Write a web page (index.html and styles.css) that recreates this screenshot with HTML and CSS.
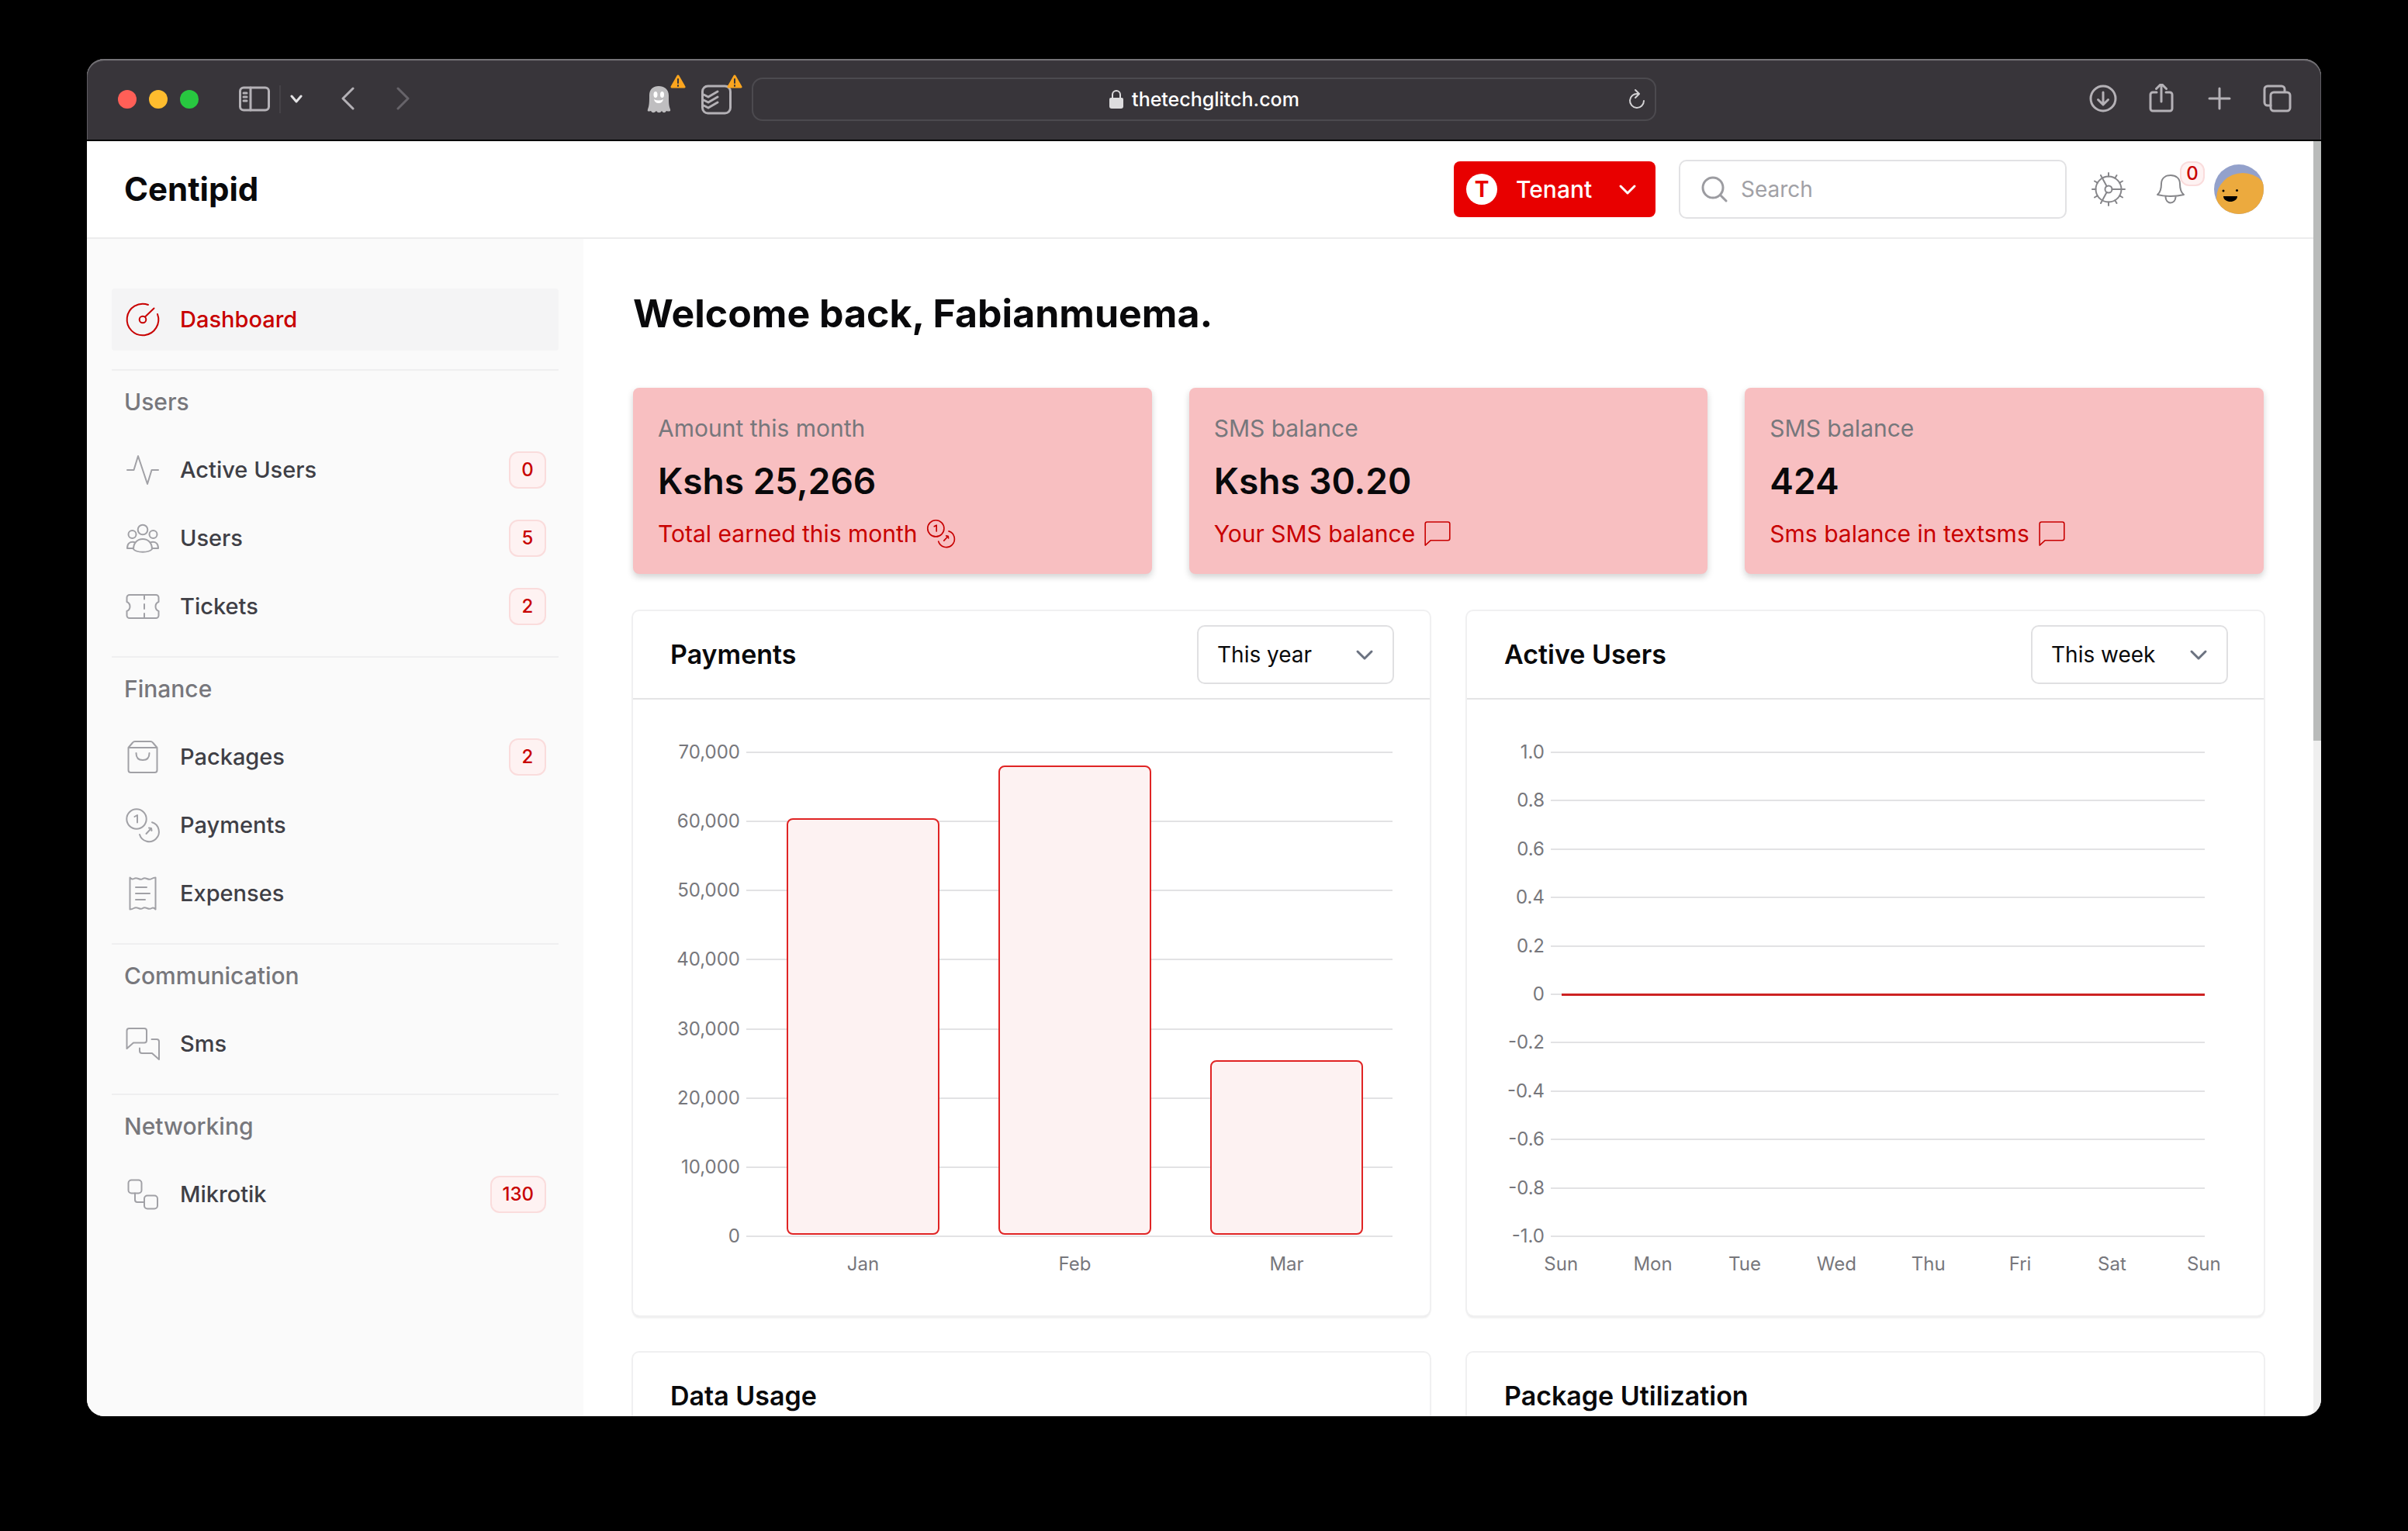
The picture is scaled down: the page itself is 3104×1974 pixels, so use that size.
FILE: index.html
```html
<!DOCTYPE html>
<html lang="en">
<head>
<meta charset="utf-8">
<title>Centipid</title>
<link rel="stylesheet" href="styles.css">
</head>
<body>
<svg class="sprite" aria-hidden="true">
  <symbol id="i-coins" viewBox="0 0 48 48"><circle cx="16" cy="16" r="12.700"/><path d="M13.500 13 17 11v9.500M36 20.300a12.700 12.700 0 1 1-16 15.700M28.500 35l6-6.500M32 27.500l3 .5.500 3"/></symbol>
  <symbol id="i-bubble" viewBox="0 0 48 48"><path d="M4 43V8a3 3 0 0 1 3-3h34a3 3 0 0 1 3 3v24a3 3 0 0 1-3 3H13z"/></symbol>
  <symbol id="i-chevron" viewBox="0 0 24 24"><path d="M3 8l9 9 9-9"/></symbol>
</svg>
<div class="window">
  <div class="toolbar">
    <div class="toolbar-left">
      <div class="lights"><span class="light close"></span><span class="light minimize"></span><span class="light zoom"></span></div>
      <button class="tool tool-sidebar" aria-label="Show sidebar"><svg width="40" height="34" viewBox="0 0 40 34"><rect x="1.500" y="2" width="37" height="29" rx="4.500"/><path d="M15 2v29M6 9h4M6 14h4M6 19h4"/></svg></button>
      <span class="tool-divider"></span>
      <button class="tool tool-menu" aria-label="Tab groups"><svg width="16" height="16" viewBox="0 0 16 16"><path class="bright" d="M2 4l6 7 6-7"/></svg></button>
      <button class="tool tool-back" aria-label="Back"><svg width="20" height="32" viewBox="0 0 20 32"><path d="M17 2 4 15l13 13"/></svg></button>
      <button class="tool tool-forward" aria-label="Forward" disabled><svg width="20" height="32" viewBox="0 0 20 32"><path d="M3 2l13 13L3 28"/></svg></button>
      <div class="extensions">
        <button class="tool" aria-label="Ghost extension"><svg width="52" height="64" viewBox="0 0 52 64"><path class="ghost" d="M4 27C4 19 9 15 16 15s13 4 13 12c0 8 0 13 2 18 1 3-2 3-5 2-2 3-4 3-6 0-2 3-5 3-7 0-3 3-5 3-7 0-3 1-5 1-4-2 2-5 2-10 2-18z"/><ellipse class="eye" cx="12" cy="26" rx="2.500" ry="4"/><ellipse class="eye" cx="20.500" cy="26" rx="2.500" ry="4"/><path class="eye" d="M10 32q6 3 12 0-1 5-6 5t-6-5z"/><path class="warn" d="M41 2l8 14H33z"/><path class="warn-mark" d="M41 6v5M41 14v1"/></svg></button>
        <button class="tool" aria-label="Task list extension"><svg width="56" height="64" viewBox="0 0 56 64"><rect class="thick" x="2.500" y="15" width="36" height="35" rx="7"/><path class="thick" d="M4 26l6 3 12-7M4 33l6 3 12-7M4 40l6 3 12-7"/><path class="warn" d="M44 2l8 14H36z"/><path class="warn-mark" d="M44 6v5M44 14v1"/></svg></button>
      </div>
    </div>
    <div class="address">
      <span></span>
      <span class="address-text"><svg width="20" height="26" viewBox="0 0 20 26"><path class="lock" d="M3 11h14a2 2 0 0 1 2 2v9a3 3 0 0 1-3 3H4a3 3 0 0 1-3-3v-9a2 2 0 0 1 2-2z"/><path class="lock-bow" d="M5 12V7a5 5 0 0 1 10 0v5"/></svg>thetechglitch.com</span>
      <button class="tool reload" aria-label="Reload"><svg width="26" height="28" viewBox="0 0 26 28"><path class="bright-thin" d="M14 7A9 9 0 1 0 22 16M11 2l5 5-5 5"/></svg></button>
    </div>
    <div class="toolbar-right">
      <button class="tool" aria-label="Downloads"><svg width="40" height="40" viewBox="0 0 40 40"><circle cx="20" cy="19" r="16"/><path d="M20 11v15M13.500 20.500 20 27l6.500-6.500"/></svg></button>
      <button class="tool" aria-label="Share"><svg width="40" height="40" viewBox="0 0 40 40"><path d="M14 11H9a3 3 0 0 0-3 3v18a3 3 0 0 0 3 3h22a3 3 0 0 0 3-3V14a3 3 0 0 0-3-3h-5M20 23V1M13.500 6.500 20 0l6.500 6.500"/></svg></button>
      <button class="tool" aria-label="New tab"><svg width="40" height="40" viewBox="0 0 40 40"><path d="M20 6v26M7 19h26"/></svg></button>
      <button class="tool" aria-label="Tab overview"><svg width="40" height="40" viewBox="0 0 40 40"><path d="M11 28H7a4 4 0 0 1-4-4V7a4 4 0 0 1 4-4h18a4 4 0 0 1 4 4v3"/><rect x="11" y="11" width="25" height="24" rx="4"/></svg></button>
    </div>
  </div>

  <div class="viewport">
    <div class="page">
      <header class="header">
        <a class="brand" href="#">Centipid</a>
        <div class="header-tools">
          <button class="tenant"><span class="tenant-badge">T</span>Tenant<svg class="chevron" width="24" height="24"><use href="#i-chevron"/></svg></button>
          <label class="search"><svg width="36" height="36" viewBox="0 0 36 36"><circle cx="16" cy="16" r="13"/><path d="M25.500 25.500 33 33"/></svg><input type="search" placeholder="Search" aria-label="Search"></label>
          <div class="header-icons">
            <button class="icon-button" aria-label="Settings"><svg class="gear" width="48" height="48" viewBox="0 0 48 48"><circle cx="24" cy="24" r="16.500"/><circle cx="24" cy="24" r="4.500"/><path d="M28.500 24H45M21.700 20.200 14 6M21.700 27.800 14 42M24 3v4.500M24 40.500V45M3 24h4.500M34.500 6l-2.200 3.700M42 13.500l-3.700 2.200M42 34.500l-3.700-2.200M34.500 42l-2.200-3.700M6 34.500l3.700-2.200M6 13.500l3.700 2.200"/></svg></button>
            <button class="icon-button bell" aria-label="Notifications"><svg width="48" height="48" viewBox="0 0 48 48"><path d="M7 31c4-3 5-7 5-14C12 10 17 6 24 6s12 4 12 11c0 7 1 11 5 14-10 2.500-24 2.500-34 0zM17.500 33.500c0 5 3 8 6.500 8s6.500-3 6.500-8"/></svg><span class="bell-count">0</span></button>
            <button class="icon-button" aria-label="Profile"><svg class="avatar" width="64" height="64" viewBox="0 0 64 64"><clipPath id="face"><circle cx="32" cy="32" r="32"/></clipPath><g clip-path="url(#face)"><path fill="#93a1cb" d="M0 0h64v64H0z"/><ellipse cx="37" cy="44" rx="34" ry="33" fill="#ecaa3e"/></g><path d="M12 41h18c0 4-4 7-9 7s-9-3-9-7z"/><circle cx="12" cy="34" r="1.500"/><circle cx="29.500" cy="33.500" r="1.500"/></svg></button>
          </div>
        </div>
      </header>

      <div class="body">
        <nav class="sidebar">
          <ul class="nav-list">
            <li><a class="nav-item active" href="#"><svg width="48" height="48" viewBox="0 0 48 48"><path d="M31 5A20.300 20.300 0 1 0 43 17"/><circle cx="24" cy="24" r="4.300"/><path d="M27 20.500 38.500 9.500"/></svg>Dashboard</a></li>
          </ul>
          <section class="nav-section">
            <h2>Users</h2>
            <ul class="nav-list">
              <li><a class="nav-item" href="#"><svg width="48" height="48" viewBox="0 0 48 48"><path d="M4 24h8.500L18 6l12 36 5.500-18H44"/></svg>Active Users<span class="badge">0</span></a></li>
              <li><a class="nav-item" href="#"><svg width="48" height="48" viewBox="0 0 48 48"><circle cx="24" cy="13" r="6.300"/><circle cx="10.500" cy="19" r="5"/><circle cx="37.500" cy="19" r="5"/><path d="M12 38c0-8 5-13 12-13s12 5 12 13c-4 5-20 5-24 0zM12 37H4c0-6 3-9 9-8M36 37h8c0-6-3-9-9-8"/></svg>Users<span class="badge">5</span></a></li>
              <li><a class="nav-item" href="#"><svg width="48" height="48" viewBox="0 0 48 48"><path d="M7 9h34a3.500 3.500 0 0 1 3.500 3.500V18a6.500 6.500 0 0 0 0 12v5.500A3.500 3.500 0 0 1 41 39H7a3.500 3.500 0 0 1-3.500-3.500V30a6.500 6.500 0 0 0 0-12v-5.500A3.500 3.500 0 0 1 7 9zM26 9v5.500M26 21v6M26 33v6"/></svg>Tickets<span class="badge">2</span></a></li>
            </ul>
          </section>
          <section class="nav-section">
            <h2>Finance</h2>
            <ul class="nav-list">
              <li><a class="nav-item" href="#"><svg width="48" height="48" viewBox="0 0 48 48"><path d="M5.500 12 11 5.500A4 4 0 0 1 14 4h20a4 4 0 0 1 3 1.500L42.500 12v29a3 3 0 0 1-3 3h-31a3 3 0 0 1-3-3zM5.500 12h37M15.500 19c0 6 3.500 9 8.500 9s8.500-3 8.500-9"/></svg>Packages<span class="badge">2</span></a></li>
              <li><a class="nav-item" href="#"><svg width="48" height="48"><use href="#i-coins"/></svg>Payments</a></li>
              <li><a class="nav-item" href="#"><svg width="48" height="48" viewBox="0 0 48 48"><path d="M7.500 3.500q2.500 3 5 1.500t6 0 5.500 0 5.500 0 6 0 5-1.500v41q-2.500-3-5-1.500t-6 0-5.500 0-5.500 0-6 0-5 1.500zM15 16h14M15 24h18M15 32h12"/></svg>Expenses</a></li>
            </ul>
          </section>
          <section class="nav-section">
            <h2>Communication</h2>
            <ul class="nav-list">
              <li><a class="nav-item" href="#"><svg width="48" height="48" viewBox="0 0 48 48"><path d="M3.500 30V7a3 3 0 0 1 3-3H26a3 3 0 0 1 3 3v12.500a3 3 0 0 1-3 3H12zM35.500 18H42a3 3 0 0 1 3 3v23l-9-8H23a3 3 0 0 1-3-3v-3.500"/></svg>Sms</a></li>
            </ul>
          </section>
          <section class="nav-section">
            <h2>Networking</h2>
            <ul class="nav-list">
              <li><a class="nav-item" href="#"><svg width="48" height="48" viewBox="0 0 48 48"><rect x="5.500" y="5.500" width="17" height="17" rx="4"/><rect x="26" y="25.500" width="17" height="17" rx="4"/><path d="M14 22.500V31a3 3 0 0 0 3 3h9"/></svg>Mikrotik<span class="badge">130</span></a></li>
            </ul>
          </section>
        </nav>

        <main class="main">
          <h1>Welcome back, Fabianmuema.</h1>
          <div class="stats">
            <article class="stat"><p class="stat-label">Amount this month</p><p class="stat-value">Kshs 25,266</p><p class="stat-note">Total earned this month<svg width="40" height="40"><use href="#i-coins"/></svg></p></article>
            <article class="stat"><p class="stat-label">SMS balance</p><p class="stat-value">Kshs 30.20</p><p class="stat-note">Your SMS balance<svg width="38" height="38"><use href="#i-bubble"/></svg></p></article>
            <article class="stat"><p class="stat-label">SMS balance</p><p class="stat-value">424</p><p class="stat-note">Sms balance in textsms<svg width="38" height="38"><use href="#i-bubble"/></svg></p></article>
          </div>

          <div class="panels">
            <section class="panel">
              <div class="panel-head"><h2>Payments</h2><div class="select"><select aria-label="Payments period"><option>This year</option></select><svg class="chevron" width="24" height="24"><use href="#i-chevron"/></svg></div></div>
              <div class="panel-body payments">
                <div class="chart">
                  <div class="ticks">
                    <div class="tick"><span>70,000</span></div><div class="tick"><span>60,000</span></div><div class="tick"><span>50,000</span></div><div class="tick"><span>40,000</span></div><div class="tick"><span>30,000</span></div><div class="tick"><span>20,000</span></div><div class="tick"><span>10,000</span></div><div class="tick"><span>0</span></div>
                  </div>
                  <div class="bars"><div class="bar" style="height:86.4%"></div><div class="bar" style="height:97.2%"></div><div class="bar" style="height:36.1%"></div></div>
                </div>
                <div class="x-axis"><span>Jan</span><span>Feb</span><span>Mar</span></div>
              </div>
            </section>
            <section class="panel">
              <div class="panel-head"><h2>Active Users</h2><div class="select"><select aria-label="Active users period"><option>This week</option></select><svg class="chevron" width="24" height="24"><use href="#i-chevron"/></svg></div></div>
              <div class="panel-body active-users">
                <div class="chart">
                  <div class="ticks">
                    <div class="tick"><span>1.0</span></div><div class="tick"><span>0.8</span></div><div class="tick"><span>0.6</span></div><div class="tick"><span>0.4</span></div><div class="tick"><span>0.2</span></div><div class="tick"><span>0</span></div><div class="tick"><span>-0.2</span></div><div class="tick"><span>-0.4</span></div><div class="tick"><span>-0.6</span></div><div class="tick"><span>-0.8</span></div><div class="tick"><span>-1.0</span></div>
                  </div>
                  <div class="series"></div>
                </div>
                <div class="x-axis"><span>Sun</span><span>Mon</span><span>Tue</span><span>Wed</span><span>Thu</span><span>Fri</span><span>Sat</span><span>Sun</span></div>
              </div>
            </section>
            <section class="panel"><div class="panel-head"><h2>Data Usage</h2></div></section>
            <section class="panel"><div class="panel-head"><h2>Package Utilization</h2></div></section>
          </div>
        </main>
      </div>
    </div>
    <div class="scrollbar"><div class="scroll-thumb"></div></div>
  </div>
</div>
</body>
</html>
```
FILE: styles.css
```css
* { box-sizing: border-box; }

body {
  margin: 0;
  height: 100vh;
  padding: 76px 112px 148px;
  background: #000;
  color: #09090b;
  font: 500 28px/40px Inter, "Open Sans", sans-serif;
}

h1, h2, p, ul { margin: 0; padding: 0; }
ul { list-style: none; }
a { color: inherit; text-decoration: none; }
button, input, select { font: inherit; color: inherit; border: 0; background: none; padding: 0; margin: 0; }
svg { display: block; flex: none; fill: none; stroke: currentColor; stroke-width: 2; stroke-linecap: round; stroke-linejoin: round; }
.sprite { display: none; }

.window {
  height: 100%;
  display: flex;
  flex-direction: column;
  border-radius: 22px;
  overflow: hidden;
  background: #fff;
}

/* Browser toolbar */
.toolbar {
  flex: none;
  height: 106px;
  display: grid;
  grid-template-columns: 1fr 1166px 1fr;
  align-items: center;
  background: #38353a;
  color: #b4b1b6;
  border-radius: 22px 22px 0 0;
  border-bottom: 2px solid #000;
  box-shadow: inset 0 2px 1px #77757a, inset 1px 0 #5d5b60, inset -1px 0 #5d5b60;
}
.toolbar svg { stroke-width: 3; }
.toolbar-left { display: flex; align-items: center; padding: 0 10px 0 40px; }
.lights { display: flex; gap: 16px; margin-right: 52px; }
.light { width: 24px; height: 24px; border-radius: 50%; }
.close { background: #ff5f57; }
.minimize { background: #febc2e; }
.zoom { background: #28c840; }
.tool-divider { width: 2px; height: 36px; margin: 0 12px; background: #454247; }
.tool-menu { margin-right: 48px; }
.tool-back { margin-right: 52px; }
.tool-forward { color: #67646a; }
.extensions { display: flex; gap: 18px; margin-left: auto; }
.toolbar .bright { stroke: #e4e3e5; }
.toolbar .bright-thin { stroke: #d4d3d5; stroke-width: 2; }
.toolbar .ghost { fill: #bfbec0; stroke: none; }
.toolbar .eye { fill: #fff; stroke: none; }
.toolbar .thick { stroke-width: 3; }
.toolbar .warn { fill: #fba51f; stroke: #fba51f; stroke-width: 3; }
.toolbar .warn-mark { stroke: #38353a; stroke-width: 2; }
.address {
  display: grid;
  grid-template-columns: 1fr auto 1fr;
  align-items: center;
  height: 56px;
  padding: 0 10px;
  border: 2px solid #4c4a4f;
  border-radius: 14px;
  color: #fff;
  font-size: 25px;
}
.address-text { display: flex; align-items: center; gap: 10px; }
.toolbar .lock { fill: #dddcde; stroke: none; }
.toolbar .lock-bow { stroke: #dddcde; stroke-width: 2; }
.reload { justify-self: end; }
.toolbar-right { display: flex; justify-content: flex-end; gap: 35px; padding-right: 36px; }

/* Page and scrollbar */
.viewport { flex: 1; min-height: 0; display: grid; grid-template-columns: 1fr 10px; }
.page { min-height: 0; overflow: hidden; display: flex; flex-direction: column; }
.scrollbar { background: #efefef; }
.scroll-thumb { height: 47%; background: #b9bbba; }

/* Header */
.header {
  flex: none;
  height: 126px;
  display: flex;
  align-items: center;
  justify-content: space-between;
  padding: 0 64px 0 48px;
  border-bottom: 2px solid #ececed;
}
.brand { font-size: 42px; font-weight: 700; }
.header-tools { display: flex; align-items: center; gap: 30px; }
.header-icons { display: flex; align-items: center; gap: 32px; color: #86868a; }
.tenant {
  display: flex;
  align-items: center;
  height: 72px;
  width: 260px;
  padding: 0 24px 0 16px;
  gap: 24px;
  border-radius: 8px;
  background: #e80000;
  color: #fff;
  font-size: 30px;
}
.tenant .chevron { margin-left: auto; stroke-width: 3; }
.tenant-badge {
  width: 40px;
  height: 40px;
  border-radius: 50%;
  background: #fff;
  color: #e80000;
  font-size: 28px;
  font-weight: 700;
}
.search {
  display: flex;
  align-items: center;
  gap: 16px;
  width: 500px;
  height: 76px;
  padding: 0 26px;
  border: 2px solid #e2e2e4;
  border-radius: 10px;
  color: #9c9ca1;
}
.search svg { stroke-width: 3; }
.search input { flex: 1; min-width: 0; outline: 0; font-weight: 400; }
.search input::placeholder { color: #a1a1a6; }
.bell { position: relative; }
.bell-count {
  position: absolute;
  left: 36px;
  top: -12px;
  width: 32px;
  height: 32px;
  border: 2px solid #fadcdc;
  border-radius: 12px;
  background: #fef2f2;
  color: #c80000;
  font-size: 24px;
  line-height: 28px;
}
.avatar { fill: #000; stroke: none; }

/* Sidebar */
.body { flex: 1; min-height: 0; display: grid; grid-template-columns: 640px 1fr; }
.sidebar { padding: 64px 32px; background: #fafafa; }
.nav-list { display: grid; gap: 8px; }
.nav-item {
  display: flex;
  align-items: center;
  gap: 24px;
  height: 80px;
  padding: 0 16px;
  border-radius: 4px;
  color: #3f3f46;
  font-size: 29px;
}
.nav-item svg { color: #a1a1a6; }
.nav-item.active, .nav-item.active svg { color: #c80000; }
.nav-item.active { background: #f4f4f5; }
.nav-section { margin-top: 24px; padding-top: 20px; border-top: 2px solid #efeff0; }
.nav-section h2 { padding: 0 16px; margin-bottom: 28px; font-size: 30px; font-weight: 500; color: #77777c; }
.badge {
  margin-left: auto;
  min-width: 48px;
  padding: 0 14px;
  border: 2px solid #fadcdc;
  border-radius: 12px;
  background: #fef2f2;
  color: #c80000;
  font-size: 24px;
  line-height: 44px;
  text-align: center;
}

/* Main content */
.main { min-width: 0; padding: 64px; }
h1 { margin-bottom: 64px; font-size: 50px; line-height: 64px; font-weight: 700; }
.stats { display: grid; grid-template-columns: repeat(3, 1fr); gap: 48px; }
.stat {
  display: grid;
  gap: 16px;
  padding: 32px;
  border-radius: 8px;
  background: #f8bfc1;
  box-shadow: 0 4px 8px #0000002e;
}
.stat-label { font-size: 30px; font-weight: 400; color: #77777c; }
.stat-value { font-size: 46px; line-height: 64px; font-weight: 600; }
.stat-note { display: flex; align-items: center; gap: 10px; font-size: 30px; font-weight: 400; color: #c80000; }

.panels { display: grid; grid-template-columns: 1fr 1fr; gap: 48px; margin-top: 48px; }
.panel { border-radius: 8px; box-shadow: 0 0 0 2px #f0f0f1, 0 3px 3px #0000001a; }
.panel-head {
  display: flex;
  align-items: center;
  justify-content: space-between;
  height: 114px;
  padding: 0 46px 0 48px;
  border-bottom: 2px solid #e4e4e5;
}
.panel-head h2 { font-size: 34px; font-weight: 600; }
.select { display: grid; align-items: center; width: 254px; font-weight: 400; }
.select > * { grid-area: 1 / 1; }
.select select {
  appearance: none;
  height: 76px;
  padding: 0 24px;
  border: 2px solid #e0e0e2;
  border-radius: 10px;
}
.select .chevron { justify-self: end; margin-right: 26px; color: #6b7280; stroke-width: 3; pointer-events: none; }

/* Charts */
.panel-body { padding: 48px 48px 50px; font-size: 24px; font-weight: 400; color: #77777c; }
.chart { display: grid; height: 664px; }
.chart > * { grid-area: 1 / 1; }
.ticks { display: flex; flex-direction: column; justify-content: space-between; }
.tick { display: flex; align-items: center; gap: 8px; text-align: right; }
.tick::after { content: ""; flex: 1; height: 2px; background: #e2e2e4; }
.payments .tick span { width: 90px; }
.active-users .tick span { width: 52px; }
.active-users .ticks { padding-right: 28px; }
.bars { display: grid; grid-template-columns: repeat(3, 1fr); align-items: end; justify-items: center; padding: 20px 0 22px 112px; }
.bar { width: 72%; border: 2px solid #e02424; border-radius: 8px; background: #fdf2f2; }
.series { align-self: center; height: 3px; margin: 0 28px 0 74px; background: #cd2222; }
.x-axis { display: grid; grid-auto-flow: column; grid-auto-columns: 1fr; text-align: center; line-height: 32px; }
.payments .x-axis { padding-left: 112px; }
.active-users .x-axis { margin: 0 -30px 0 14px; }
```
